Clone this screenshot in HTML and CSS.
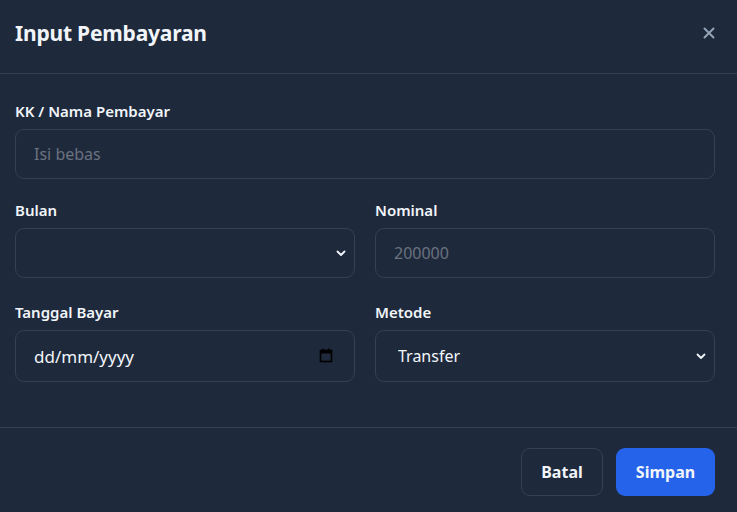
FILE: index.html
```html
<!DOCTYPE html>
<html lang="id">
<head>
<meta charset="utf-8">
<title>Input Pembayaran</title>
<link rel="stylesheet" href="styles.css">
</head>
<body>
<div class="modal">
  <header class="modal-header">
    <h2 class="modal-title">Input Pembayaran</h2>
    <button class="close-btn" aria-label="Tutup">
      <svg width="12" height="12" viewBox="0 0 12 12"><path d="M1.5 1.5 L10.5 10.5 M10.5 1.5 L1.5 10.5" stroke="#94a3b8" stroke-width="2" stroke-linecap="round"/></svg>
    </button>
  </header>
  <div class="modal-body">
    <div class="field">
      <label class="label">KK / Nama Pembayar</label>
      <input class="control" type="text" placeholder="Isi bebas">
    </div>
    <div class="row">
      <div class="field">
        <label class="label">Bulan</label>
        <div class="select-wrap">
          <select class="control select"><option></option></select>
          <svg class="chev" width="10" height="7" viewBox="0 0 10 7"><path d="M1.5 1.5 L5 5 L8.5 1.5" fill="none" stroke="#f1f5f9" stroke-width="1.8" stroke-linecap="round" stroke-linejoin="round"/></svg>
        </div>
      </div>
      <div class="field">
        <label class="label">Nominal</label>
        <input class="control" type="text" placeholder="200000">
      </div>
    </div>
    <div class="row row-last">
      <div class="field">
        <label class="label">Tanggal Bayar</label>
        <div class="select-wrap">
          <div class="control date">dd/mm/yyyy</div>
          <svg class="cal" width="14" height="15" viewBox="0 0 14 15"><rect x="1.5" y="2.5" width="11" height="11" fill="none" stroke="#000" stroke-width="1.6"/><rect x="1.5" y="2.5" width="11" height="3" fill="#000"/><rect x="3.5" y="0.5" width="1.6" height="3" fill="#000"/><rect x="8.9" y="0.5" width="1.6" height="3" fill="#000"/></svg>
        </div>
      </div>
      <div class="field">
        <label class="label">Metode</label>
        <div class="select-wrap">
          <select class="control select tall"><option>Transfer</option></select>
          <svg class="chev" width="10" height="7" viewBox="0 0 10 7"><path d="M1.5 1.5 L5 5 L8.5 1.5" fill="none" stroke="#f1f5f9" stroke-width="1.8" stroke-linecap="round" stroke-linejoin="round"/></svg>
        </div>
      </div>
    </div>
  </div>
  <footer class="modal-footer">
    <button class="btn btn-ghost">Batal</button>
    <button class="btn btn-primary">Simpan</button>
  </footer>
</div>
</body>
</html>
```
FILE: styles.css
```css
* { box-sizing: border-box; }
html, body { margin: 0; padding: 0; }
body {
  background: #1e293b;
  font-family: "Noto Sans", "Open Sans", sans-serif;
  color: #f1f5f9;
  width: 737px;
  height: 512px;
  overflow: hidden;
}
.modal { background: #1e293b; }
.modal-header {
  height: 74px;
  display: flex;
  align-items: center;
  justify-content: space-between;
  padding: 0 22px 8px 15px;
  border-bottom: 1px solid #334155;
}
.modal-title {
  margin: 0;
  font-size: 21px;
  font-weight: 700;
  color: #f1f5f9;
  letter-spacing: -0.2px;
}
.close-btn {
  background: none;
  border: 0;
  padding: 0;
  display: flex;
  cursor: pointer;
}
.modal-body {
  padding: 27px 22px 45px 15px;
  display: flex;
  flex-direction: column;
  gap: 21px;
}
.row {
  display: grid;
  grid-template-columns: 1fr 1fr;
  gap: 20px;
}
.row-last { margin-top: 3px; }
.field { display: flex; flex-direction: column; gap: 8px; }
.label {
  font-size: 15px;
  font-weight: 600;
  color: #f1f5f9;
  line-height: 20px;
}
.control {
  width: 100%;
  height: 50px;
  background: #1e293b;
  border: 1px solid #334155;
  border-radius: 9px;
  padding: 0 18px;
  font-family: "Noto Sans", "Open Sans", sans-serif;
  font-size: 16px;
  color: #f1f5f9;
  outline: none;
}
.control::placeholder { color: #6b7280; }
.select-wrap { position: relative; }
.select {
  appearance: none;
  -webkit-appearance: none;
  padding-left: 22px;
}
.tall, .date { height: 52px; }
.date {
  display: flex;
  align-items: center;
  font-size: 17px;
}
.chev {
  position: absolute;
  right: 9px;
  top: 50%;
  margin-top: -3px;
  pointer-events: none;
}
.cal {
  position: absolute;
  right: 22px;
  top: 50%;
  margin-top: -8px;
}
.modal-footer {
  border-top: 1px solid #334155;
  display: flex;
  justify-content: flex-end;
  gap: 13px;
  padding: 20px 22px 0 15px;
}
.btn {
  height: 48px;
  border-radius: 9px;
  font-family: "Noto Sans", "Open Sans", sans-serif;
  font-size: 16px;
  font-weight: 700;
  color: #f1f5f9;
  cursor: pointer;
}
.btn-ghost {
  width: 82px;
  background: transparent;
  border: 1px solid #334155;
}
.btn-primary {
  width: 99px;
  background: #2563eb;
  border: 0;
}
```
